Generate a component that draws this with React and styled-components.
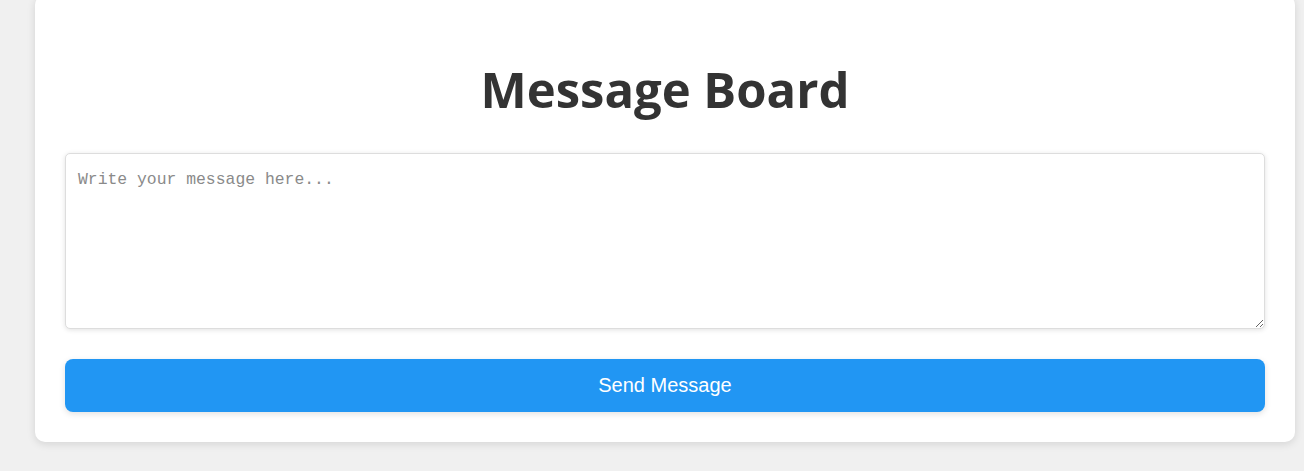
import React, { useState } from "react";
import styled, { createGlobalStyle } from "styled-components";

const GlobalStyle = createGlobalStyle`
  html, body {
    margin: 0;
    padding: 0;
    background: #f0f0f0;
    overflow: hidden;
  }
  body {
    font-family: "Open Sans", "Noto Sans", sans-serif;
  }
`;

const Page = styled.div`
  padding: 0 9px 30px 35px;
`;

const Card = styled.div`
  margin-top: -5px;
  background: #fff;
  border-radius: 10px;
  box-shadow: 0 2px 8px rgba(0, 0, 0, 0.12);
  padding: 30px;
  display: flex;
  flex-direction: column;
`;

const Title = styled.h1`
  margin: 35px 0 34px;
  text-align: center;
  font-family: "Open Sans", "Noto Sans", sans-serif;
  font-weight: 700;
  font-size: 49px;
  line-height: 1.2;
  color: #333;
`;

const MessageInput = styled.textarea`
  box-sizing: border-box;
  width: 100%;
  height: 176px;
  padding: 16px 12px;
  border: 1px solid #ddd;
  border-radius: 5px;
  box-shadow: 0 1px 5px rgba(0, 0, 0, 0.12);
  font-family: "Liberation Mono", "DejaVu Sans Mono", monospace;
  font-size: 16.4px;
  color: #333;
  outline: none;
  resize: vertical;
  &::placeholder {
    color: #8a8a8a;
  }
`;

const SendButton = styled.button`
  margin-top: 30px;
  height: 53px;
  border: none;
  border-radius: 8px;
  background: #2196f3;
  color: #fff;
  font-family: "Liberation Sans", Arial, sans-serif;
  font-size: 20px;
  cursor: pointer;
  box-shadow: 0 2px 6px rgba(0, 0, 0, 0.12);
`;

const App = () => {
  const [message, setMessage] = useState("");

  return (
    <>
      <GlobalStyle />
      <Page>
        <Card>
          <Title>Message Board</Title>
          <MessageInput
            placeholder="Write your message here..."
            value={message}
            onChange={(e) => setMessage(e.target.value)}
          />
          <SendButton onClick={() => setMessage("")}>Send Message</SendButton>
        </Card>
      </Page>
    </>
  );
};

export default App;
